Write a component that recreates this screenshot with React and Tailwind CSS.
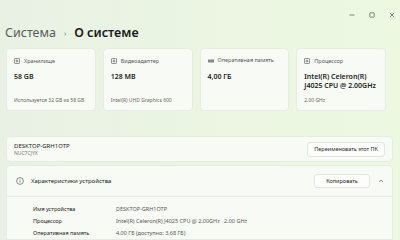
import React from "react";

const font = { fontFamily: '"Noto Sans", "Open Sans", sans-serif' };

function Card({ icon, label, value, sub }) {
  return (
    <div className="flex flex-col rounded-[4px] bg-[#f8fbf5] border border-[#e4ede0] px-[7px] pt-[9px] pb-[7px] h-[63px]">
      <div className="flex items-center gap-[4px] text-[5.5px] text-[#555] leading-none">
        {icon}
        <span>{label}</span>
      </div>
      <div className="mt-[8px] text-[7px] font-semibold text-[#1a1a1a] leading-[9px] whitespace-nowrap">{value}</div>
      <div className="mt-auto text-[5px] text-[#666] leading-none">{sub}</div>
    </div>
  );
}

const Ico = () => (
  <svg width="6" height="6" viewBox="0 0 6 6">
    <rect x="0.5" y="0.5" width="5" height="5" rx="0.6" fill="none" stroke="#777" strokeWidth="0.8" />
    <rect x="1.8" y="1.8" width="2.4" height="2.4" fill="#999" />
  </svg>
);

export default function App() {
  return (
    <div
      className="w-[400px] h-[240px] overflow-hidden flex flex-col bg-[linear-gradient(90deg,#e9f1e5_0%,#ebf5e2_50%,#edf8e1_100%)]"
      style={font}
    >
      <div className="h-[31px] flex items-start justify-end pt-[12px] pr-[5px] gap-[14px]">
        <svg width="6" height="6" viewBox="0 0 6 6"><path d="M0.5 3h5" stroke="#555" strokeWidth="0.7" /></svg>
        <svg width="6" height="6" viewBox="0 0 6 6"><rect x="0.8" y="0.8" width="4.4" height="4.4" rx="0.5" fill="none" stroke="#555" strokeWidth="0.7" /></svg>
        <svg width="6" height="6" viewBox="0 0 6 6"><path d="M1 1l4 4M5 1l-4 4" stroke="#555" strokeWidth="0.7" /></svg>
      </div>
      <div className="flex items-center pl-[5px] h-[12px] text-[12.5px] leading-none">
        <span className="text-[#5c5c5c]">Система</span>
        <span className="mx-[8px] text-[#777] text-[7px]">›</span>
        <span className="font-semibold text-[#1a1a1a]">О системе</span>
      </div>
      <div className="grid grid-cols-4 gap-[7px] pl-[6px] pr-[14px] mt-[9px]">
        <Card icon={<Ico />} label="Хранилище" value="58 GB" sub="Используется 32 GB из 58 GB" />
        <Card icon={<Ico />} label="Видеоадаптер" value="128 MB" sub="Intel(R) UHD Graphics 600" />
        <Card
          icon={<svg width="6" height="4" viewBox="0 0 6 4"><rect x="0" y="0.5" width="6" height="3" fill="#888" /></svg>}
          label="Оперативная память"
          value="4,00 ГБ"
          sub=""
        />
        <Card
          icon={<Ico />}
          label="Процессор"
          value={<>Intel(R) Celeron(R)<br />J4025 CPU @ 2.00GHz</>}
          sub="2.00 GHz"
        />
      </div>
      <div className="mt-[25px] ml-[6px] mr-[7px] h-[31px] rounded-[4px] bg-[#f8fbf5] border border-[#e4ede0] flex items-center justify-between pl-[7px] pr-[7px]">
        <div className="flex flex-col">
          <span className="text-[6px] text-[#1a1a1a] leading-[8px]">DESKTOP-GRH1OTP</span>
          <span className="text-[5px] text-[#777] leading-[7px]">NUC7CJYX</span>
        </div>
        <div className="h-[15px] px-[6px] flex items-center rounded-[3px] bg-[#fdfefc] border border-[#e2e6df] text-[5.5px] text-[#222]">
          Переименовать этот ПК
        </div>
      </div>
      <div className="mt-[3px] ml-[6px] mr-[7px] flex-1 rounded-t-[4px] bg-[#f8fbf5] border border-[#e4ede0] flex flex-col">
        <div className="h-[31px] flex items-center border-b border-[#e6ece2] pl-[9px] pr-[8px]">
          <svg width="8" height="8" viewBox="0 0 8 8">
            <circle cx="4" cy="4" r="3.4" fill="none" stroke="#444" strokeWidth="0.6" />
            <path d="M4 3.4v2.4" stroke="#444" strokeWidth="0.6" />
            <circle cx="4" cy="2.4" r="0.4" fill="#444" />
          </svg>
          <span className="ml-[7px] text-[6px] text-[#1a1a1a]">Характеристики устройства</span>
          <div className="ml-auto h-[14px] w-[56px] flex items-center justify-center rounded-[3px] bg-[#fdfefc] border border-[#e2e6df] text-[5.5px] text-[#222]">
            Копировать
          </div>
          <svg className="ml-[8px]" width="6" height="4" viewBox="0 0 6 4"><path d="M1 3l2-2 2 2" fill="none" stroke="#555" strokeWidth="0.6" /></svg>
        </div>
        <div className="flex flex-col pl-[26px] pt-[6px] text-[5.5px] leading-[12px]">
          {[
            ["Имя устройства", "DESKTOP-GRH1OTP"],
            ["Процессор", "Intel(R) Celeron(R) J4025 CPU @ 2.00GHz   2.00 GHz"],
            ["Оперативная память", "4,00 ГБ (доступно: 3,68 ГБ)"],
          ].map(([k, v]) => (
            <div key={k} className="flex">
              <span className="w-[83px] text-[#1a1a1a]">{k}</span>
              <span className="text-[#555] whitespace-pre">{v}</span>
            </div>
          ))}
        </div>
      </div>
    </div>
  );
}
